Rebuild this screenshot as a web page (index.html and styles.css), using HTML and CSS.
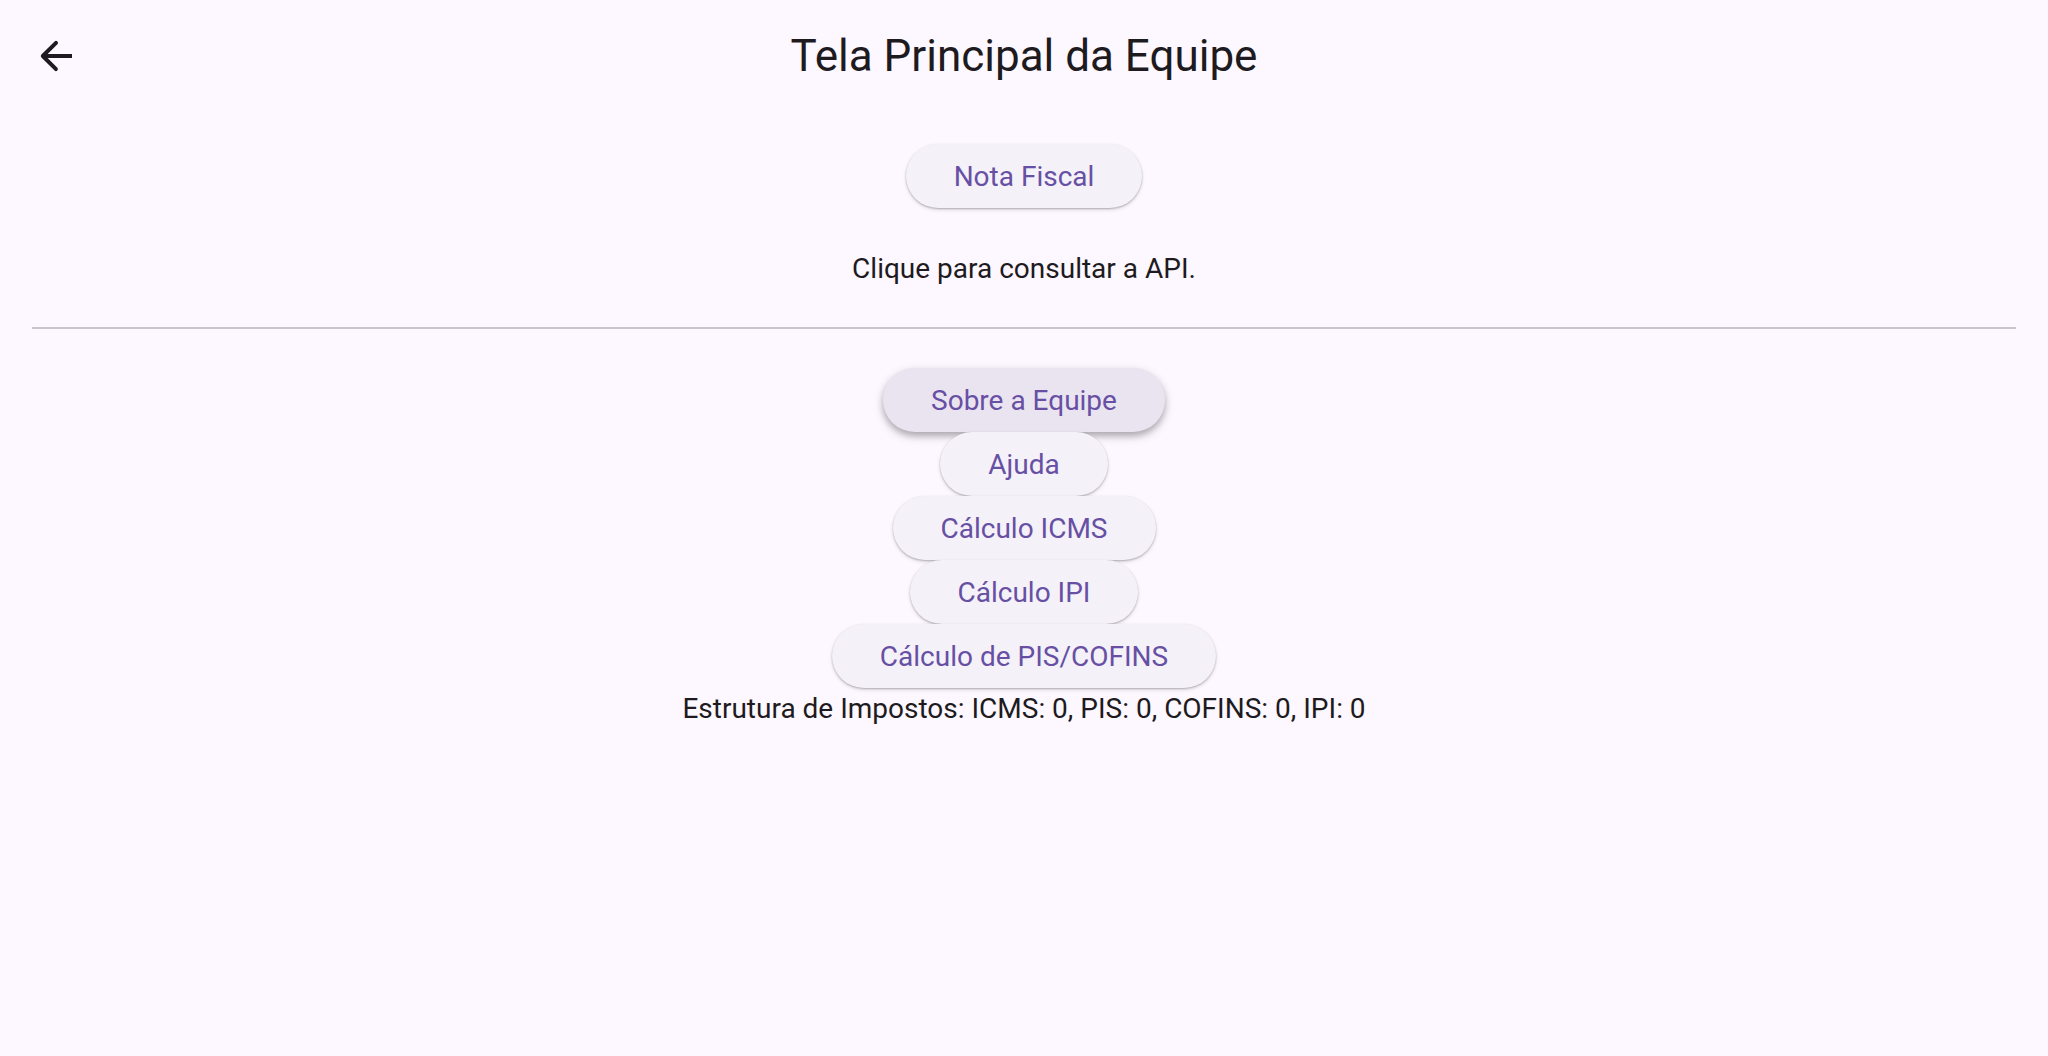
FILE: index.html
```html
<!DOCTYPE html>
<html lang="pt-BR">
<head>
  <meta charset="utf-8">
  <meta name="viewport" content="width=device-width, initial-scale=1">
  <title>Tela Principal da Equipe</title>
  <link rel="stylesheet" href="styles.css">
</head>
<body>
  <header class="app-bar">
    <button class="back" type="button" aria-label="Voltar">
      <svg viewBox="0 0 24 24" aria-hidden="true"><path d="M20 11H7.83l4.88-4.88c.39-.39.39-1.03 0-1.42a1 1 0 0 0-1.41 0L4.7 11.3a1 1 0 0 0 0 1.41l6.59 6.59a1 1 0 0 0 1.41-1.41L7.83 13H20v-2z"/></svg>
    </button>
    <h1 class="title">Tela Principal da Equipe</h1>
  </header>
  <main class="content">
    <section class="group">
      <button class="button" type="button">Nota Fiscal</button>
      <p class="text hint">Clique para consultar a API.</p>
    </section>
    <hr class="divider">
    <section class="group">
      <button class="button raised" type="button">Sobre a Equipe</button>
      <button class="button" type="button">Ajuda</button>
      <button class="button" type="button">Cálculo ICMS</button>
      <button class="button" type="button">Cálculo IPI</button>
      <button class="button" type="button">Cálculo de PIS/COFINS</button>
      <p class="text">Estrutura de Impostos: ICMS: 0, PIS: 0, COFINS: 0, IPI: 0</p>
    </section>
  </main>
</body>
</html>
```
FILE: styles.css
```css
* {
  box-sizing: border-box;
}

body {
  margin: 0;
  min-height: 100vh;
  background: #fdf7ff;
  color: #1d1b20;
  font-family: Roboto, "Liberation Sans", sans-serif;
  font-size: 28px;
  line-height: 40px;
}

.app-bar {
  display: grid;
  grid-template-columns: 112px 1fr 112px;
  align-items: center;
  height: 112px;
}

.back {
  display: grid;
  place-items: center;
  width: 80px;
  height: 80px;
  margin: 0 auto;
  padding: 0;
  border: 0;
  border-radius: 50%;
  background: transparent;
  color: inherit;
}

.back svg {
  width: 48px;
  height: 48px;
  fill: currentColor;
}

.title {
  margin: 0;
  font-size: 44px;
  font-weight: 400;
  line-height: 56px;
  text-align: center;
}

.content {
  padding: 32px;
}

.group {
  display: flex;
  flex-direction: column;
  align-items: center;
}

.button {
  height: 64px;
  padding: 2px 48px 0;
  border: 0;
  border-radius: 32px;
  background: #f4f1f9;
  box-shadow: 0 1px 2px rgba(0, 0, 0, 0.24), 0 2px 4px rgba(0, 0, 0, 0.1);
  color: #6750a4;
  font: inherit;
}

.raised {
  background: #eae4f0;
  box-shadow: 0 4px 6px rgba(0, 0, 0, 0.22), 0 4px 12px rgba(0, 0, 0, 0.14);
}

.text {
  margin: 0;
  padding-top: 1px;
  text-align: center;
}

.hint {
  margin-top: 40px;
}

.divider {
  height: 2px;
  margin: 38px 0 39px;
  border: 0;
  background: #cac4d0;
}
```
